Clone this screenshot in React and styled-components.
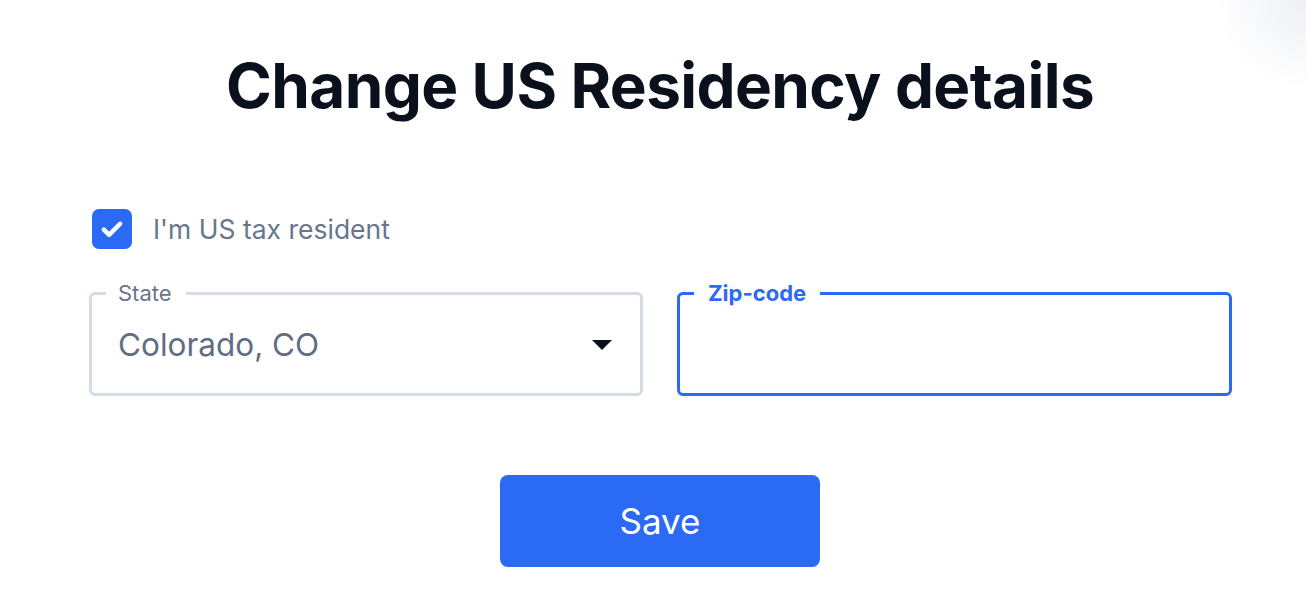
import React from 'react'
import styled, { createGlobalStyle } from 'styled-components'

const Global = createGlobalStyle`
  body {
    margin: 0;
    background: #fff;
    font-family: "Inter", "Liberation Sans", sans-serif;
  }
`

const Page = styled.div`
  width: 1306px;
  height: 592px;
  box-sizing: border-box;
  padding: 46px 75px 0 89px;
  display: flex;
  flex-direction: column;
  align-items: stretch;
  background: radial-gradient(circle at 100% 0, #eef0f4 0, #ffffff 90px);
`

const Title = styled.h1`
  margin: 0;
  text-align: center;
  font-size: 62px;
  font-weight: 700;
  letter-spacing: -0.6px;
  color: #0b111c;
  line-height: 80px;
`

const CheckRow = styled.label`
  margin-top: 83px;
  margin-left: 3px;
  display: flex;
  align-items: center;
  gap: 21px;
  font-size: 26.5px;
  color: #68768c;
`

const Box = styled.span`
  width: 40px;
  height: 40px;
  border-radius: 7px;
  background: #2a6af5;
  display: flex;
  align-items: center;
  justify-content: center;
`

const Fields = styled.div`
  margin-top: 33px;
  display: grid;
  grid-template-columns: 554px 555px;
  gap: 34px;
`

const Field = styled.fieldset`
  margin: 0;
  height: 114px;
  box-sizing: border-box;
  border: 3px solid ${p => (p.$active ? '#2a6af5' : '#d5dce5')};
  border-radius: 6px;
  padding: 0 26px 0 26px;
  display: flex;
  align-items: center;
  justify-content: space-between;
`

const Legend = styled.legend`
  padding: 0 14px 0 ${p => (p.$active ? 14 : 12)}px;
  margin-left: -12px;
  font-size: 22px;
  line-height: 22px;
  color: ${p => (p.$active ? '#2a6af5' : '#68768c')};
  font-weight: ${p => (p.$active ? 700 : 400)};
`

const Value = styled.span`
  font-size: 31.5px;
  color: #5f6d84;
  margin-top: -8px;
`

const Caret = styled.span`
  width: 0;
  height: 0;
  border-left: 10px solid transparent;
  border-right: 10px solid transparent;
  border-top: 10px solid #0b111c;
  margin-top: -8px;
  margin-right: 2px;
`

const Actions = styled.div`
  display: flex;
  justify-content: center;
  margin-top: 79px;
`

const SaveBtn = styled.button`
  width: 320px;
  height: 92px;
  border: none;
  border-radius: 8px;
  background: #2a6af5;
  color: #fff;
  font-family: inherit;
  font-size: 35px;
  font-weight: 400;
  cursor: pointer;
`

export default function App() {
  return (
    <>
      <Global />
      <Page>
        <Title>Change US Residency details</Title>
        <CheckRow>
          <Box>
            <svg width="28" height="28" viewBox="0 0 24 24" fill="none" stroke="#fff" strokeWidth="3.8" strokeLinecap="round" strokeLinejoin="round">
              <path d="M5 12.5l4.5 4.5L19 7.5" />
            </svg>
          </Box>
          I'm US tax resident
        </CheckRow>
        <Fields>
          <Field>
            <Legend>State</Legend>
            <Value>Colorado, CO</Value>
            <Caret />
          </Field>
          <Field $active>
            <Legend $active>Zip-code</Legend>
          </Field>
        </Fields>
        <Actions>
          <SaveBtn>Save</SaveBtn>
        </Actions>
      </Page>
    </>
  )
}
